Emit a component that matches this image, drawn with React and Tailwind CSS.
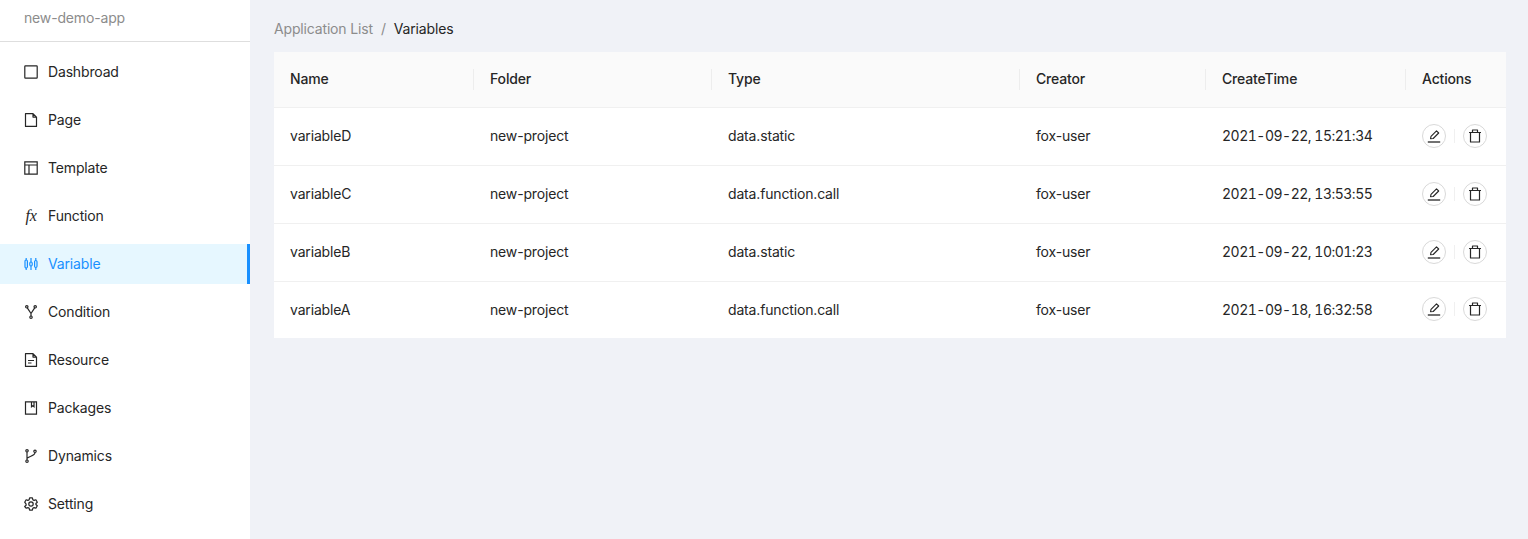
import React from 'react';

const Icon = ({ children, className = '' }) => (
  <svg width="14" height="14" viewBox="0 0 14 14" fill="none" stroke="currentColor" strokeWidth="1.2" className={className}>
    {children}
  </svg>
);

const icons = {
  dashboard: <rect x="0.8" y="0.8" width="12.4" height="12.4" rx="0.6" />,
  page: <path d="M1.500.6h7.500l3.500 3.500v9.300h-11zM9 .6v3.500h3.500" strokeLinejoin="round" />,
  template: <path d="M.8.8h12.400v12.400H.8zM.8 4h12.400M5 4v9.200" />,
  func: null,
  variable: (
    <g strokeWidth="1.2">
      <rect x="1" y="3" width="2.4" height="8" rx="1.2" />
      <rect x="5.8" y="5" width="2.4" height="4" rx="1.2" />
      <rect x="10.6" y="3.5" width="2.4" height="7" rx="1.2" />
      <path d="M2.2 1v2M2.2 11v2M7 1v4M7 9v4M11.8 1v2.5M11.8 10.500v2.500" />
    </g>
  ),
  condition: (
    <g>
      <circle cx="2.800" cy="1.800" r="1.200" />
      <circle cx="11.200" cy="1.800" r="1.200" />
      <circle cx="7" cy="12.200" r="1.200" />
      <path d="M3.300 2.900 7 8.500l3.700-5.600M7 8.500v2.500" />
    </g>
  ),
  resource: <path d="M1.500.6h7.500l3.500 3.500v9.300h-11zM9 .6v3.500h3.500M4 7.500h6M4 10h3.500" strokeLinejoin="round" />,
  packages: <path d="M1.500.8h11v12.400h-11zM7.500.8v5l1.300-1 1.200 1V.8" />,
  dynamics: (
    <g>
      <circle cx="3" cy="1.800" r="1.200" />
      <circle cx="3" cy="12.200" r="1.200" />
      <circle cx="11" cy="2.300" r="1.200" />
      <path d="M3 3v8M11 3.500c0 3.500-6 3.800-8 5.800" />
    </g>
  ),
  setting: (
    <g>
      <path d="M5.600.8h2.800l.4 1.900 1.300.7 1.800-.6 1.400 2.400-1.400 1.300v1l1.400 1.300-1.400 2.400-1.800-.6-1.300.7-.4 1.900H5.600l-.4-1.900-1.300-.7-1.800.6L.7 9.500l1.400-1.300v-1L.7 5.200l1.400-2.400 1.800.6 1.300-.7z" strokeLinejoin="round" />
      <circle cx="7" cy="7" r="2.200" />
    </g>
  ),
};

const menu = [
  ['Dashbroad', 'dashboard'],
  ['Page', 'page'],
  ['Template', 'template'],
  ['Function', 'func'],
  ['Variable', 'variable'],
  ['Condition', 'condition'],
  ['Resource', 'resource'],
  ['Packages', 'packages'],
  ['Dynamics', 'dynamics'],
  ['Setting', 'setting'],
];

const rows = [
  ['variableD', 'new-project', 'data.static', 'fox-user', '2021-09-22, 15:21:34'],
  ['variableC', 'new-project', 'data.function.call', 'fox-user', '2021-09-22, 13:53:55'],
  ['variableB', 'new-project', 'data.static', 'fox-user', '2021-09-22, 10:01:23'],
  ['variableA', 'new-project', 'data.function.call', 'fox-user', '2021-09-18, 16:32:58'],
];

const columns = [
  ['Name', 'w-[200px]'],
  ['Folder', 'w-[238px]'],
  ['Type', 'w-[308px]'],
  ['Creator', 'w-[186px]'],
  ['CreateTime', 'w-[200px]'],
  ['Actions', 'w-[100px]'],
];

const CircleButton = ({ children }) => (
  <button className="flex h-6 w-6 items-center justify-center rounded-full border border-[#d9d9d9] bg-white text-[#262626]">
    {children}
  </button>
);

const App = () => {
  return (
    <div className="flex h-[539px] w-[1528px] overflow-hidden bg-[#f0f2f7] text-[14px] tracking-[-0.16px] text-[#262626] font-['Inter',sans-serif]">
      <aside className="h-full w-[250px] shrink-0 bg-white">
        <div className="flex h-[42px] items-center border-b border-[#dedede] pb-[6px] pl-6 text-[#8c8c8c]">new-demo-app</div>
        <nav className="flex flex-col gap-2 pt-[10px]">
          {menu.map(([label, icon]) => {
            const active = label === 'Variable';
            return (
              <div
                key={label}
                className={active
                  ? 'flex h-10 items-center gap-[10px] border-r-[3px] border-[#1890ff] bg-[#e6f7ff] pl-6 text-[#1890ff]'
                  : 'flex h-10 items-center gap-[10px] pl-6'}
              >
                {icon === 'func' ? (
                  <span className="flex w-[14px] justify-center font-['Liberation_Serif',serif] text-[16px] italic leading-none">fx</span>
                ) : (
                  <Icon>{icons[icon]}</Icon>
                )}
                <span className="pb-[2px]">{label}</span>
              </div>
            );
          })}
        </nav>
      </aside>
      <main className="flex-1 pl-6 pr-[22px]">
        <div className="flex h-[52px] items-center gap-2 pt-1">
          <span className="text-[#8c8c8c]">Application List</span>
          <span className="text-[#8c8c8c]">/</span>
          <span>Variables</span>
        </div>
        <table className="w-[1232px] table-fixed bg-white">
          <thead>
            <tr className="h-[55px] border-b border-[#f0f0f0] bg-[#fafafa]">
              {columns.map(([title, width], i) => (
                <th key={title} className={`${width} relative px-4 pb-[2px] text-left font-medium`}>
                  {title}
                  {i < columns.length - 1 && (
                    <span className="absolute right-0 top-[17px] h-[21px] w-px bg-[#ededed]" />
                  )}
                </th>
              ))}
            </tr>
          </thead>
          <tbody>
            {rows.map((row, i) => (
              <tr key={row[0]} className={i < rows.length - 1 ? 'h-[58px] border-b border-[#f0f0f0]' : 'h-[57px]'}>
                {row.map((cell, j) => (
                  <td key={j} className={j === 4 ? 'px-4 pb-px tabular-nums tracking-[-0.5px]' : 'px-4 pb-px'}>{cell}</td>
                ))}
                <td className="pl-4 pb-px">
                  <div className="flex items-center gap-2">
                    <CircleButton>
                      <svg width="16" height="16" viewBox="0 0 16 16" fill="none" stroke="currentColor" strokeWidth="1.100">
                        <path d="M4.500 10.800 5 8.300 10.500 2.800l2.200 2.200-5.500 5.500z" strokeLinejoin="round" />
                        <path d="M1.800 14h12.400" strokeWidth="1.300" />
                      </svg>
                    </CircleButton>
                    <span className="h-[14px] w-px bg-[#f0f0f0]" />
                    <CircleButton>
                      <svg width="16" height="16" viewBox="0 0 16 16" fill="none" stroke="currentColor" strokeWidth="1.200">
                        <path d="M2 4.500h12M5.500 4.500V2h5v2.500M3.500 4.500v9.500h9V4.500" strokeLinejoin="round" />
                      </svg>
                    </CircleButton>
                  </div>
                </td>
              </tr>
            ))}
          </tbody>
        </table>
      </main>
    </div>
  );
};

export default App;
